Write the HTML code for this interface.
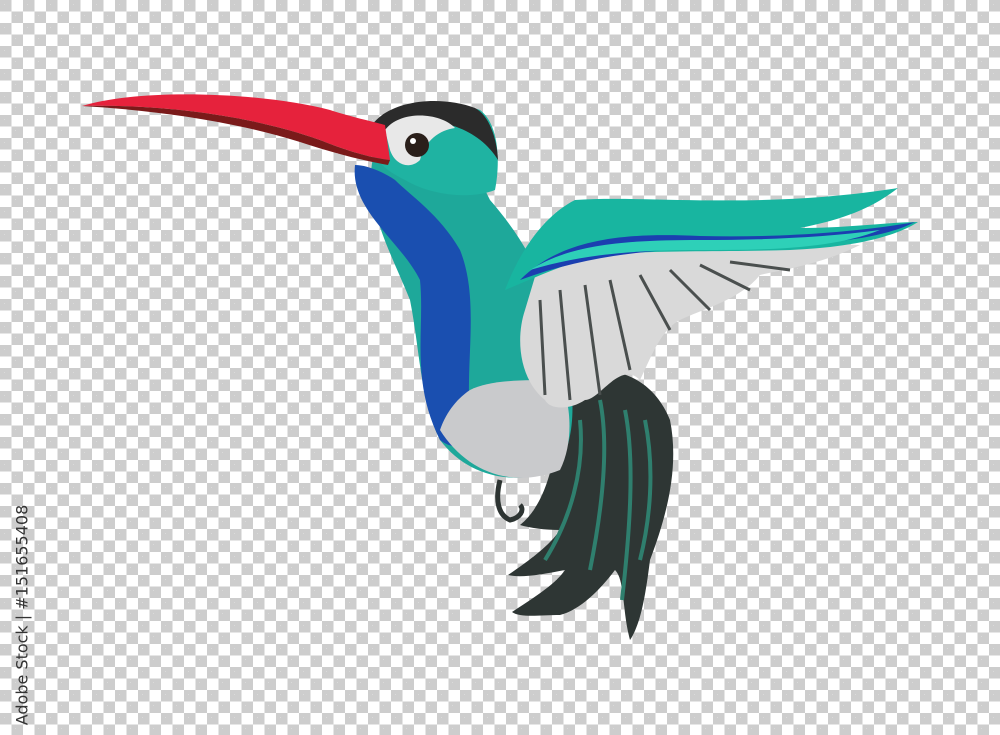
<!DOCTYPE html>
<html><head><style>
html,body{margin:0;padding:0}
body{width:1000px;height:735px;overflow:hidden;position:relative;
background-color:#fff;
background-image:linear-gradient(45deg,#cdcdcd 25%,transparent 25%,transparent 75%,#cdcdcd 75%),linear-gradient(45deg,#cdcdcd 25%,transparent 25%,transparent 75%,#cdcdcd 75%);
background-size:23px 23px;background-position:11.5px 0,0 11.5px;}
.wm{position:absolute;left:22px;top:615px;transform:translate(-50%,-50%) rotate(-90deg);font:16px "DejaVu Sans","Liberation Sans",sans-serif;color:#333;white-space:nowrap}
svg{position:absolute;left:0;top:0}
</style></head><body>
<svg width="1000" height="735" viewBox="0 0 1000 735">
<!-- lower tail/wing dark feathers -->
<path d="M560 380 C600 360 650 370 670 420 C680 470 665 520 650 560 C645 600 640 625 630 640 C622 610 625 580 615 570 C600 590 580 610 560 615 C540 615 520 618 512 612 C530 600 555 585 565 570 C540 575 520 578 508 575 C530 560 550 545 560 530 C545 530 530 528 520 525 C545 505 560 460 560 380Z" fill="#2e3634"/>
<path d="M600 400 C610 450 600 520 590 570 M625 410 C635 460 630 530 622 600 M580 420 C585 470 570 520 545 560 M645 420 C655 470 650 520 640 560" stroke="#2f7f6e" stroke-width="4" fill="none"/>
<!-- body -->
<path d="M375 150 C360 200 390 250 410 300 C420 350 420 400 440 440 C470 480 520 485 555 470 C580 440 575 380 560 330 C545 280 525 240 490 200 C475 170 470 150 460 130 C430 120 390 125 375 150Z" fill="#1ea89a"/>
<path d="M355 165 C350 210 400 240 420 280 C425 330 410 380 440 440 C460 455 470 440 470 420 C465 360 480 300 460 250 C440 215 410 195 395 180 C380 170 365 165 355 165Z" fill="#1a4fb0"/>
<path d="M440 430 C465 470 510 490 560 470 C575 440 570 400 560 380 C520 380 490 380 470 390 C455 400 445 415 440 430Z" fill="#c9cacc"/>
<!-- head -->
<path d="M370 130 C385 105 440 95 480 110 C500 125 500 165 495 190 C470 200 430 195 405 180 C385 170 370 160 370 130Z" fill="#1fb3a2"/>
<path d="M372 125 C390 100 440 95 475 108 C490 116 497 140 498 160 C480 130 440 115 405 125 C390 130 380 135 372 125Z" fill="#2b2b2b"/>
<path d="M385 130 C400 110 440 112 455 128 C440 130 425 140 420 160 C410 170 395 165 390 150Z" fill="#e8e8e8"/>
<circle cx="417" cy="145" r="12" fill="#2a1f1a"/><circle cx="413" cy="141" r="3" fill="#fff"/>
<!-- beak -->
<path d="M82 106 C140 88 260 92 330 110 C355 118 375 122 385 125 L390 160 C370 158 345 150 320 140 C250 115 160 104 82 106Z" fill="#e6223c"/>
<path d="M82 106 C160 104 250 115 320 140 C345 150 370 158 390 160 L388 165 C360 160 330 152 300 142 C230 120 150 110 82 106Z" fill="#7a1a1a"/>
<!-- feet -->
<path d="M500 480 C495 500 498 515 510 520 C520 518 525 510 520 505" stroke="#2d3432" stroke-width="5" fill="none"/>
<!-- white/gray wing feathers -->
<path d="M540 260 C620 250 720 240 860 245 C820 265 780 270 760 275 C740 300 700 310 680 320 C660 330 650 360 640 380 C620 360 600 400 585 400 C570 410 550 410 545 400 C520 380 515 340 525 310 Z" fill="#d9d9d9"/>
<path d="M540 300 L545 395 M560 290 L570 400 M585 285 L600 395 M610 280 L630 370 M640 275 L670 330 M670 270 L710 310 M700 265 L750 290 M730 262 L790 270" stroke="#4a4f4e" stroke-width="3" fill="none"/>
<!-- teal upper wing -->
<path d="M505 290 C520 250 545 215 575 200 C650 195 760 210 898 188 C870 210 840 220 800 228 C850 228 890 222 918 222 C890 240 840 248 790 250 C720 252 650 250 600 255 C560 265 530 280 505 290Z" fill="#18b5a0"/>
<path d="M520 280 C560 240 620 232 700 236 C780 238 860 232 915 222 C880 240 820 244 760 246 C680 248 600 250 520 280Z" fill="#1b3fb0"/>
<path d="M530 270 C570 245 620 240 700 240 C760 240 820 238 880 230 C830 250 760 250 700 250 C630 250 580 255 530 270Z" fill="#2ed0b8"/>
</svg>
<div class="wm">Adobe Stock | #151655408</div>
</body></html>
